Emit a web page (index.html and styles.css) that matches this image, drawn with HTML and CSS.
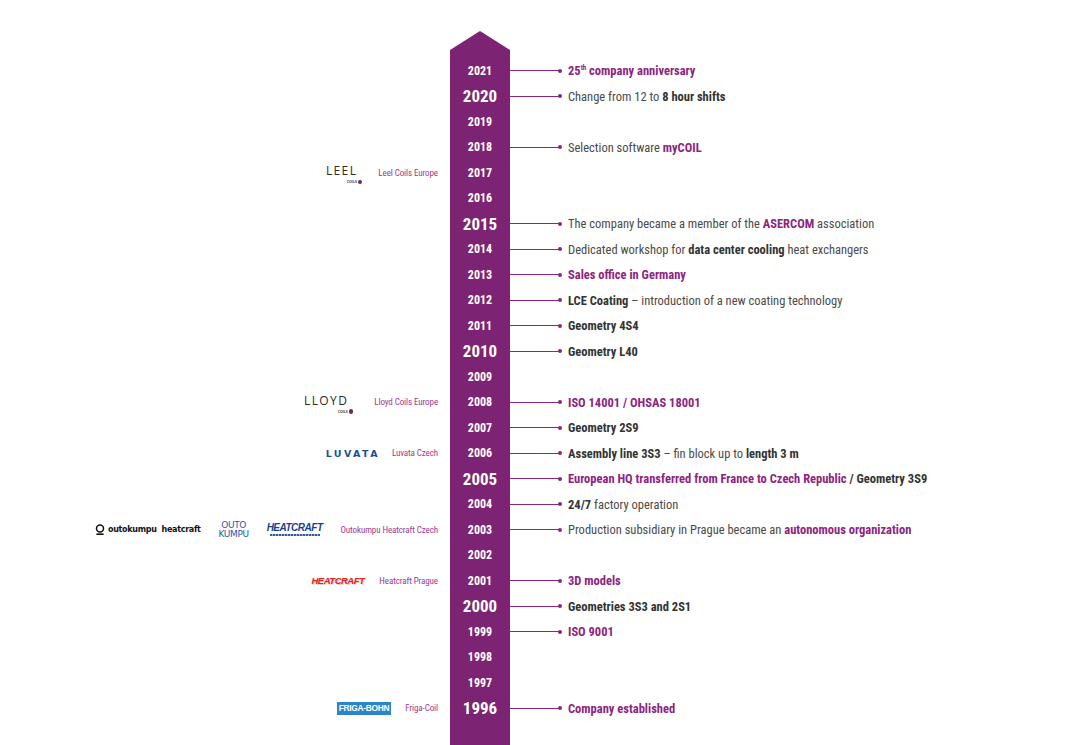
FILE: index.html
```html
<!DOCTYPE html>
<html lang="en">
<head>
<meta charset="utf-8">
<title>Timeline</title>
<link rel="stylesheet" href="styles.css">
</head>
<body>
<div class="timeline">
  <div class="head-row">
    <div class="side"></div>
    <svg class="arrow" width="60" height="28" viewBox="0 0 60 28"><polygon points="0,19 30,0 60,19 60,28 0,28" fill="#7d2373"/></svg>
    <div class="side"></div>
  </div>

  <div class="row"><div class="left"></div><div class="year">2021</div><div class="event"><span class="conn"></span><span class="txt hl">25<sup>th</sup> company anniversary</span></div></div>
  <div class="row"><div class="left"></div><div class="year big">2020</div><div class="event"><span class="conn"></span><span class="txt">Change from 12 to <b>8 hour shifts</b></span></div></div>
  <div class="row"><div class="left"></div><div class="year">2019</div><div class="event"></div></div>
  <div class="row"><div class="left"></div><div class="year">2018</div><div class="event"><span class="conn"></span><span class="txt">Selection software <b class="hl">myCOIL</b></span></div></div>
  <div class="row"><div class="left g16"><span class="logo-coils"><span class="lc-word">LEEL</span><span class="lc-sub">COILS<i class="lc-dot"></i></span></span><span class="lbl">Leel Coils Europe</span></div><div class="year">2017</div><div class="event"></div></div>
  <div class="row"><div class="left"></div><div class="year">2016</div><div class="event"></div></div>
  <div class="row"><div class="left"></div><div class="year big">2015</div><div class="event"><span class="conn"></span><span class="txt">The company became a member of the <b class="hl">ASERCOM</b> association</span></div></div>
  <div class="row"><div class="left"></div><div class="year">2014</div><div class="event"><span class="conn"></span><span class="txt">Dedicated workshop for <b>data center cooling</b> heat exchangers</span></div></div>
  <div class="row"><div class="left"></div><div class="year">2013</div><div class="event"><span class="conn"></span><span class="txt hl">Sales office in Germany</span></div></div>
  <div class="row"><div class="left"></div><div class="year">2012</div><div class="event"><span class="conn"></span><span class="txt"><b>LCE Coating</b> – introduction of a new coating technology</span></div></div>
  <div class="row"><div class="left"></div><div class="year">2011</div><div class="event"><span class="conn"></span><span class="txt"><b>Geometry 4S4</b></span></div></div>
  <div class="row"><div class="left"></div><div class="year big">2010</div><div class="event"><span class="conn"></span><span class="txt"><b>Geometry L40</b></span></div></div>
  <div class="row"><div class="left"></div><div class="year">2009</div><div class="event"></div></div>
  <div class="row"><div class="left g20"><span class="logo-coils"><span class="lc-word">LLOYD</span><span class="lc-sub">COILS<i class="lc-dot"></i></span></span><span class="lbl">Lloyd Coils Europe</span></div><div class="year">2008</div><div class="event"><span class="conn"></span><span class="txt hl">ISO 14001 / OHSAS 18001</span></div></div>
  <div class="row"><div class="left"></div><div class="year">2007</div><div class="event"><span class="conn"></span><span class="txt"><b>Geometry 2S9</b></span></div></div>
  <div class="row"><div class="left g14"><span class="logo-luvata">LUVATA</span><span class="lbl">Luvata Czech</span></div><div class="year">2006</div><div class="event"><span class="conn"></span><span class="txt"><b>Assembly line 3S3</b> – fin block up to <b>length 3 m</b></span></div></div>
  <div class="row"><div class="left"></div><div class="year big">2005</div><div class="event"><span class="conn"></span><span class="txt"><b class="hl">European HQ transferred from France to Czech Republic</b> <b>/ Geometry 3S9</b></span></div></div>
  <div class="row"><div class="left"></div><div class="year">2004</div><div class="event"><span class="conn"></span><span class="txt"><b>24/7</b> factory operation</span></div></div>
  <div class="row"><div class="left g18">
      <span class="logo-okh"><svg class="okh-ring" width="10" height="12" viewBox="0 0 10 12"><circle cx="5" cy="4.6" r="3.5" fill="none" stroke="#111" stroke-width="1.5"/><rect x="1.4" y="9.4" width="7.2" height="1.6" fill="#111"/></svg><span>outokumpu</span><span>heatcraft</span></span>
      <span class="logo-outo"><span>OUTO</span><span>KUMPU</span></span>
      <span class="logo-hc-blue"><span class="hcb-word">HEATCRAFT</span><span class="hcb-sub"></span></span>
      <span class="lbl">Outokumpu Heatcraft Czech</span></div><div class="year">2003</div><div class="event"><span class="conn"></span><span class="txt">Production subsidiary in Prague became an <b class="hl">autonomous organization</b></span></div></div>
  <div class="row"><div class="left"></div><div class="year">2002</div><div class="event"></div></div>
  <div class="row"><div class="left g15"><span class="logo-hc-red">HEATCRAFT</span><span class="lbl">Heatcraft Prague</span></div><div class="year">2001</div><div class="event"><span class="conn"></span><span class="txt hl">3D models</span></div></div>
  <div class="row"><div class="left"></div><div class="year big">2000</div><div class="event"><span class="conn"></span><span class="txt"><b>Geometries 3S3 and 2S1</b></span></div></div>
  <div class="row"><div class="left"></div><div class="year">1999</div><div class="event"><span class="conn"></span><span class="txt hl">ISO 9001</span></div></div>
  <div class="row"><div class="left"></div><div class="year">1998</div><div class="event"></div></div>
  <div class="row"><div class="left"></div><div class="year">1997</div><div class="event"></div></div>
  <div class="row"><div class="left g14"><span class="logo-friga">FRIGA-BOHN</span><span class="lbl">Friga-Coil</span></div><div class="year big">1996</div><div class="event"><span class="conn"></span><span class="txt hl">Company established</span></div></div>

  <div class="row tail"><div class="left"></div><div class="year"></div><div class="event"></div></div>
</div>
</body>
</html>
```

FILE: styles.css
```css
html, body {
  margin: 0;
  padding: 0;
  background: #ffffff;
  overflow: hidden;
}
body {
  font-family: "Roboto Condensed", "Liberation Sans Narrow", "Roboto", sans-serif;
  color: #4a4a4a;
}
.timeline {
  padding-top: 31px;
  display: flex;
  flex-direction: column;
}
.head-row {
  display: grid;
  grid-template-columns: 450px 60px 1fr;
  height: 27px;
}
.arrow {
  display: block;
}
.row {
  display: grid;
  grid-template-columns: 450px 60px 1fr;
  height: 25.5px;
}
.row.tail {
  height: 30px;
}
.left {
  display: flex;
  align-items: center;
  justify-content: flex-end;
  padding-right: 12px;
  gap: 16px;
}
.left.g14 { gap: 14px; }
.left.g15 { gap: 15px; }
.left.g18 { gap: 18px; }
.left.g20 { gap: 21px; }
.lbl {
  font-size: 9px;
  color: #9a3a8e;
  letter-spacing: -0.1px;
}
.year {
  background: #7d2373;
  color: #ffffff;
  font-weight: 700;
  font-size: 12px;
  display: flex;
  align-items: center;
  justify-content: center;
}
.year.big {
  font-size: 17px;
}
.event {
  display: flex;
  align-items: center;
}
.conn {
  position: relative;
  width: 50px;
  height: 1px;
  background: #8b2581;
  margin-right: 8px;
}
.conn::after {
  content: "";
  position: absolute;
  right: -2px;
  top: -1.5px;
  width: 4px;
  height: 4px;
  border-radius: 50%;
  background: #8b2581;
}
.txt {
  font-size: 12.5px;
  white-space: nowrap;
}
.txt b {
  font-weight: 700;
  color: #333333;
}
.txt.hl, .txt b.hl, .txt .hl {
  color: #8b2581;
  font-weight: 700;
}
.txt sup {
  font-size: 7px;
  vertical-align: 5px;
  line-height: 0;
}

/* Logos */
.logo-coils {
  display: inline-flex;
  flex-direction: column;
  align-items: flex-end;
  font-family: "Open Sans", sans-serif;
  color: #2a2a2a;
  line-height: 1;
  margin-top: 2px;
}
.lc-word {
  display: block;
  font-size: 12px;
  line-height: 16px;
  font-weight: 400;
  letter-spacing: 1.4px;
  margin-right: 5px;
}
.lc-sub {
  display: flex;
  align-items: center;
  gap: 1px;
  font-size: 3.5px;
  line-height: 5px;
  font-weight: 700;
  color: #444;
}
.lc-dot {
  display: inline-block;
  width: 4.5px;
  height: 4.5px;
  border-radius: 50%;
  background: #7a2350;
}
.logo-luvata {
  font-family: "DejaVu Sans", sans-serif;
  font-size: 9.5px;
  font-weight: 700;
  color: #1d4f91;
  letter-spacing: 2.4px;
  margin-right: -2px;
}
.logo-okh {
  display: inline-flex;
  align-items: center;
  gap: 5px;
  font-family: "DejaVu Sans", sans-serif;
  font-size: 8px;
  font-weight: 700;
  color: #111;
  letter-spacing: -0.3px;
}
.okh-ring {
  display: block;
  margin-right: -2px;
}
.logo-outo {
  display: inline-flex;
  flex-direction: column;
  align-items: center;
  font-family: "DejaVu Sans", sans-serif;
  font-size: 9px;
  line-height: 9px;
  color: #2a56a8;
  letter-spacing: -0.4px;
}
.logo-hc-blue {
  display: inline-flex;
  flex-direction: column;
  align-items: center;
}
.hcb-word {
  font-family: "Liberation Sans", sans-serif;
  font-size: 10px;
  font-weight: 700;
  font-style: italic;
  color: #1d3f8e;
  line-height: 10px;
  letter-spacing: -0.5px;
}
.hcb-sub {
  display: block;
  width: 50px;
  height: 2px;
  margin-top: 1px;
  background: repeating-linear-gradient(90deg, #3a5aa0 0 2px, #9fb0d4 2px 3px);
}
.logo-hc-red {
  font-family: "Liberation Sans", sans-serif;
  font-size: 9.5px;
  font-weight: 700;
  font-style: italic;
  color: #e2231a;
  letter-spacing: -0.5px;
  text-shadow: 1px 1px 0 #f7c2bf;
}
.logo-friga {
  font-family: "Liberation Sans", sans-serif;
  background: #2b86c9;
  color: #ffffff;
  font-size: 8.4px;
  font-weight: 700;
  padding: 1px 2px;
  letter-spacing: -0.3px;
  line-height: 11px;
}
```
